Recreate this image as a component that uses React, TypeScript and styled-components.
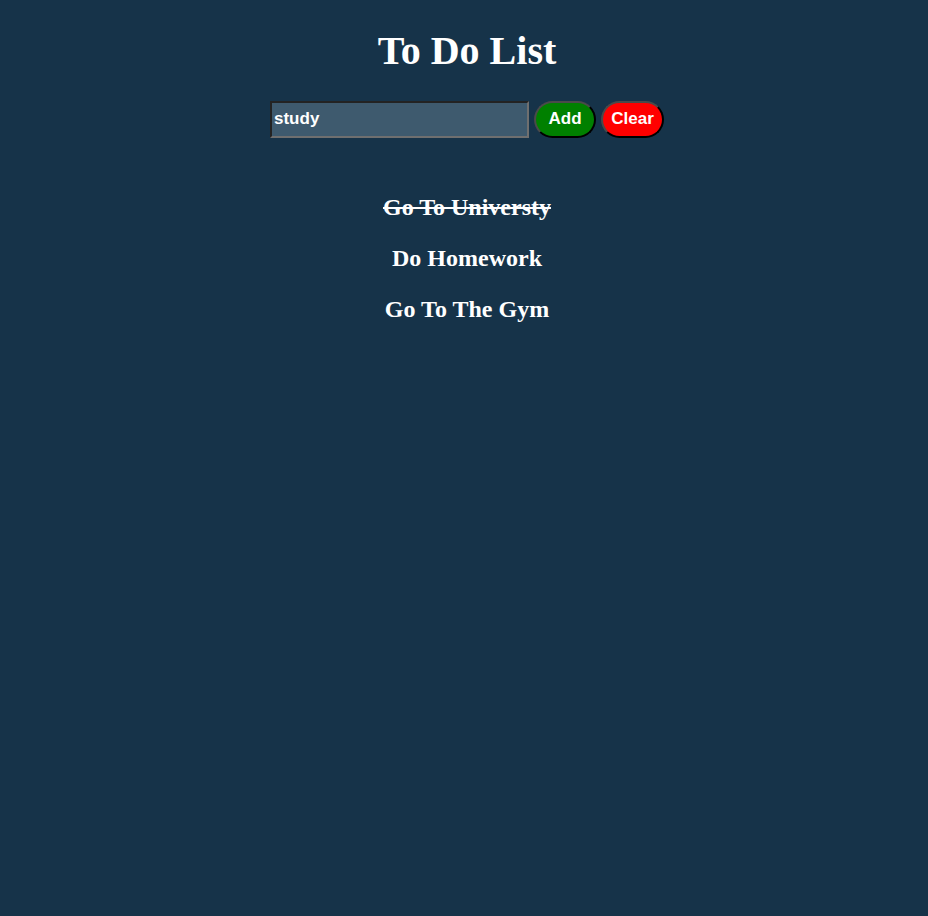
import React, { useState } from "react";
import styled, { createGlobalStyle } from "styled-components";

const GlobalStyle = createGlobalStyle`
  html, body {
    margin: 0;
    padding: 0;
    background: #163349;
    min-height: 100%;
  }
  body {
    font-family: "Liberation Serif", "Times New Roman", serif;
    color: #ffffff;
  }
`;

const Page = styled.main`
  display: flex;
  flex-direction: column;
  align-items: center;
  min-height: 916px;
  padding: 28px 0 0 6px;
  box-sizing: border-box;
`;

const Title = styled.h1`
  margin: 0;
  font-size: 40px;
  font-weight: bold;
  line-height: 46px;
  color: #ffffff;
`;

const Form = styled.div`
  display: flex;
  align-items: center;
  gap: 5px;
  margin-top: 27px;
`;

const TextInput = styled.input`
  width: 259px;
  height: 37px;
  box-sizing: border-box;
  background: #3e5a6e;
  color: #ffffff;
  border-style: solid;
  border-width: 2px;
  border-color: #232323 #6f6f6f #6f6f6f #232323;
  font-family: "Liberation Sans", Arial, sans-serif;
  font-weight: bold;
  font-size: 17px;
  padding: 0 2px 2px;
  outline: none;
`;

const Button = styled.button<{ $bg: string; $w: number }>`
  width: ${(p) => p.$w}px;
  height: 37px;
  box-sizing: border-box;
  border-radius: 20px;
  border-style: solid;
  border-width: 2px;
  border-color: #4a4a4a #000000 #000000 #4a4a4a;
  background: ${(p) => p.$bg};
  color: #ffffff;
  font-family: "Liberation Sans", Arial, sans-serif;
  font-weight: bold;
  font-size: 17px;
  padding: 0 0 2px;
  cursor: pointer;
`;

const List = styled.ul`
  list-style: none;
  margin: 55px 0 0;
  padding: 0;
  display: flex;
  flex-direction: column;
  align-items: center;
  gap: 23px;
`;

const Item = styled.li<{ $done: boolean }>`
  font-size: 24px;
  font-weight: bold;
  line-height: 28px;
  color: #ffffff;
  text-decoration: ${(p) => (p.$done ? "line-through" : "none")};
  cursor: pointer;
`;

export default function App() {
  const [text, setText] = useState("study");
  const [items, setItems] = useState([
    { label: "Go To Universty", done: true },
    { label: "Do Homework", done: false },
    { label: "Go To The Gym", done: false },
  ]);

  return (
    <>
      <GlobalStyle />
      <Page>
        <Title>To Do List</Title>
        <Form>
          <TextInput value={text} onChange={(e) => setText(e.target.value)} />
          <Button
            $bg="#008000"
            $w={62}
            onClick={() => {
              if (text.trim()) setItems([...items, { label: text, done: false }]);
            }}
          >
            Add
          </Button>
          <Button $bg="#ff0000" $w={63} onClick={() => setItems([])}>
            Clear
          </Button>
        </Form>
        <List>
          {items.map((it, i) => (
            <Item
              key={i}
              $done={it.done}
              onClick={() =>
                setItems(items.map((x, j) => (j === i ? { ...x, done: !x.done } : x)))
              }
            >
              {it.label}
            </Item>
          ))}
        </List>
      </Page>
    </>
  );
}
